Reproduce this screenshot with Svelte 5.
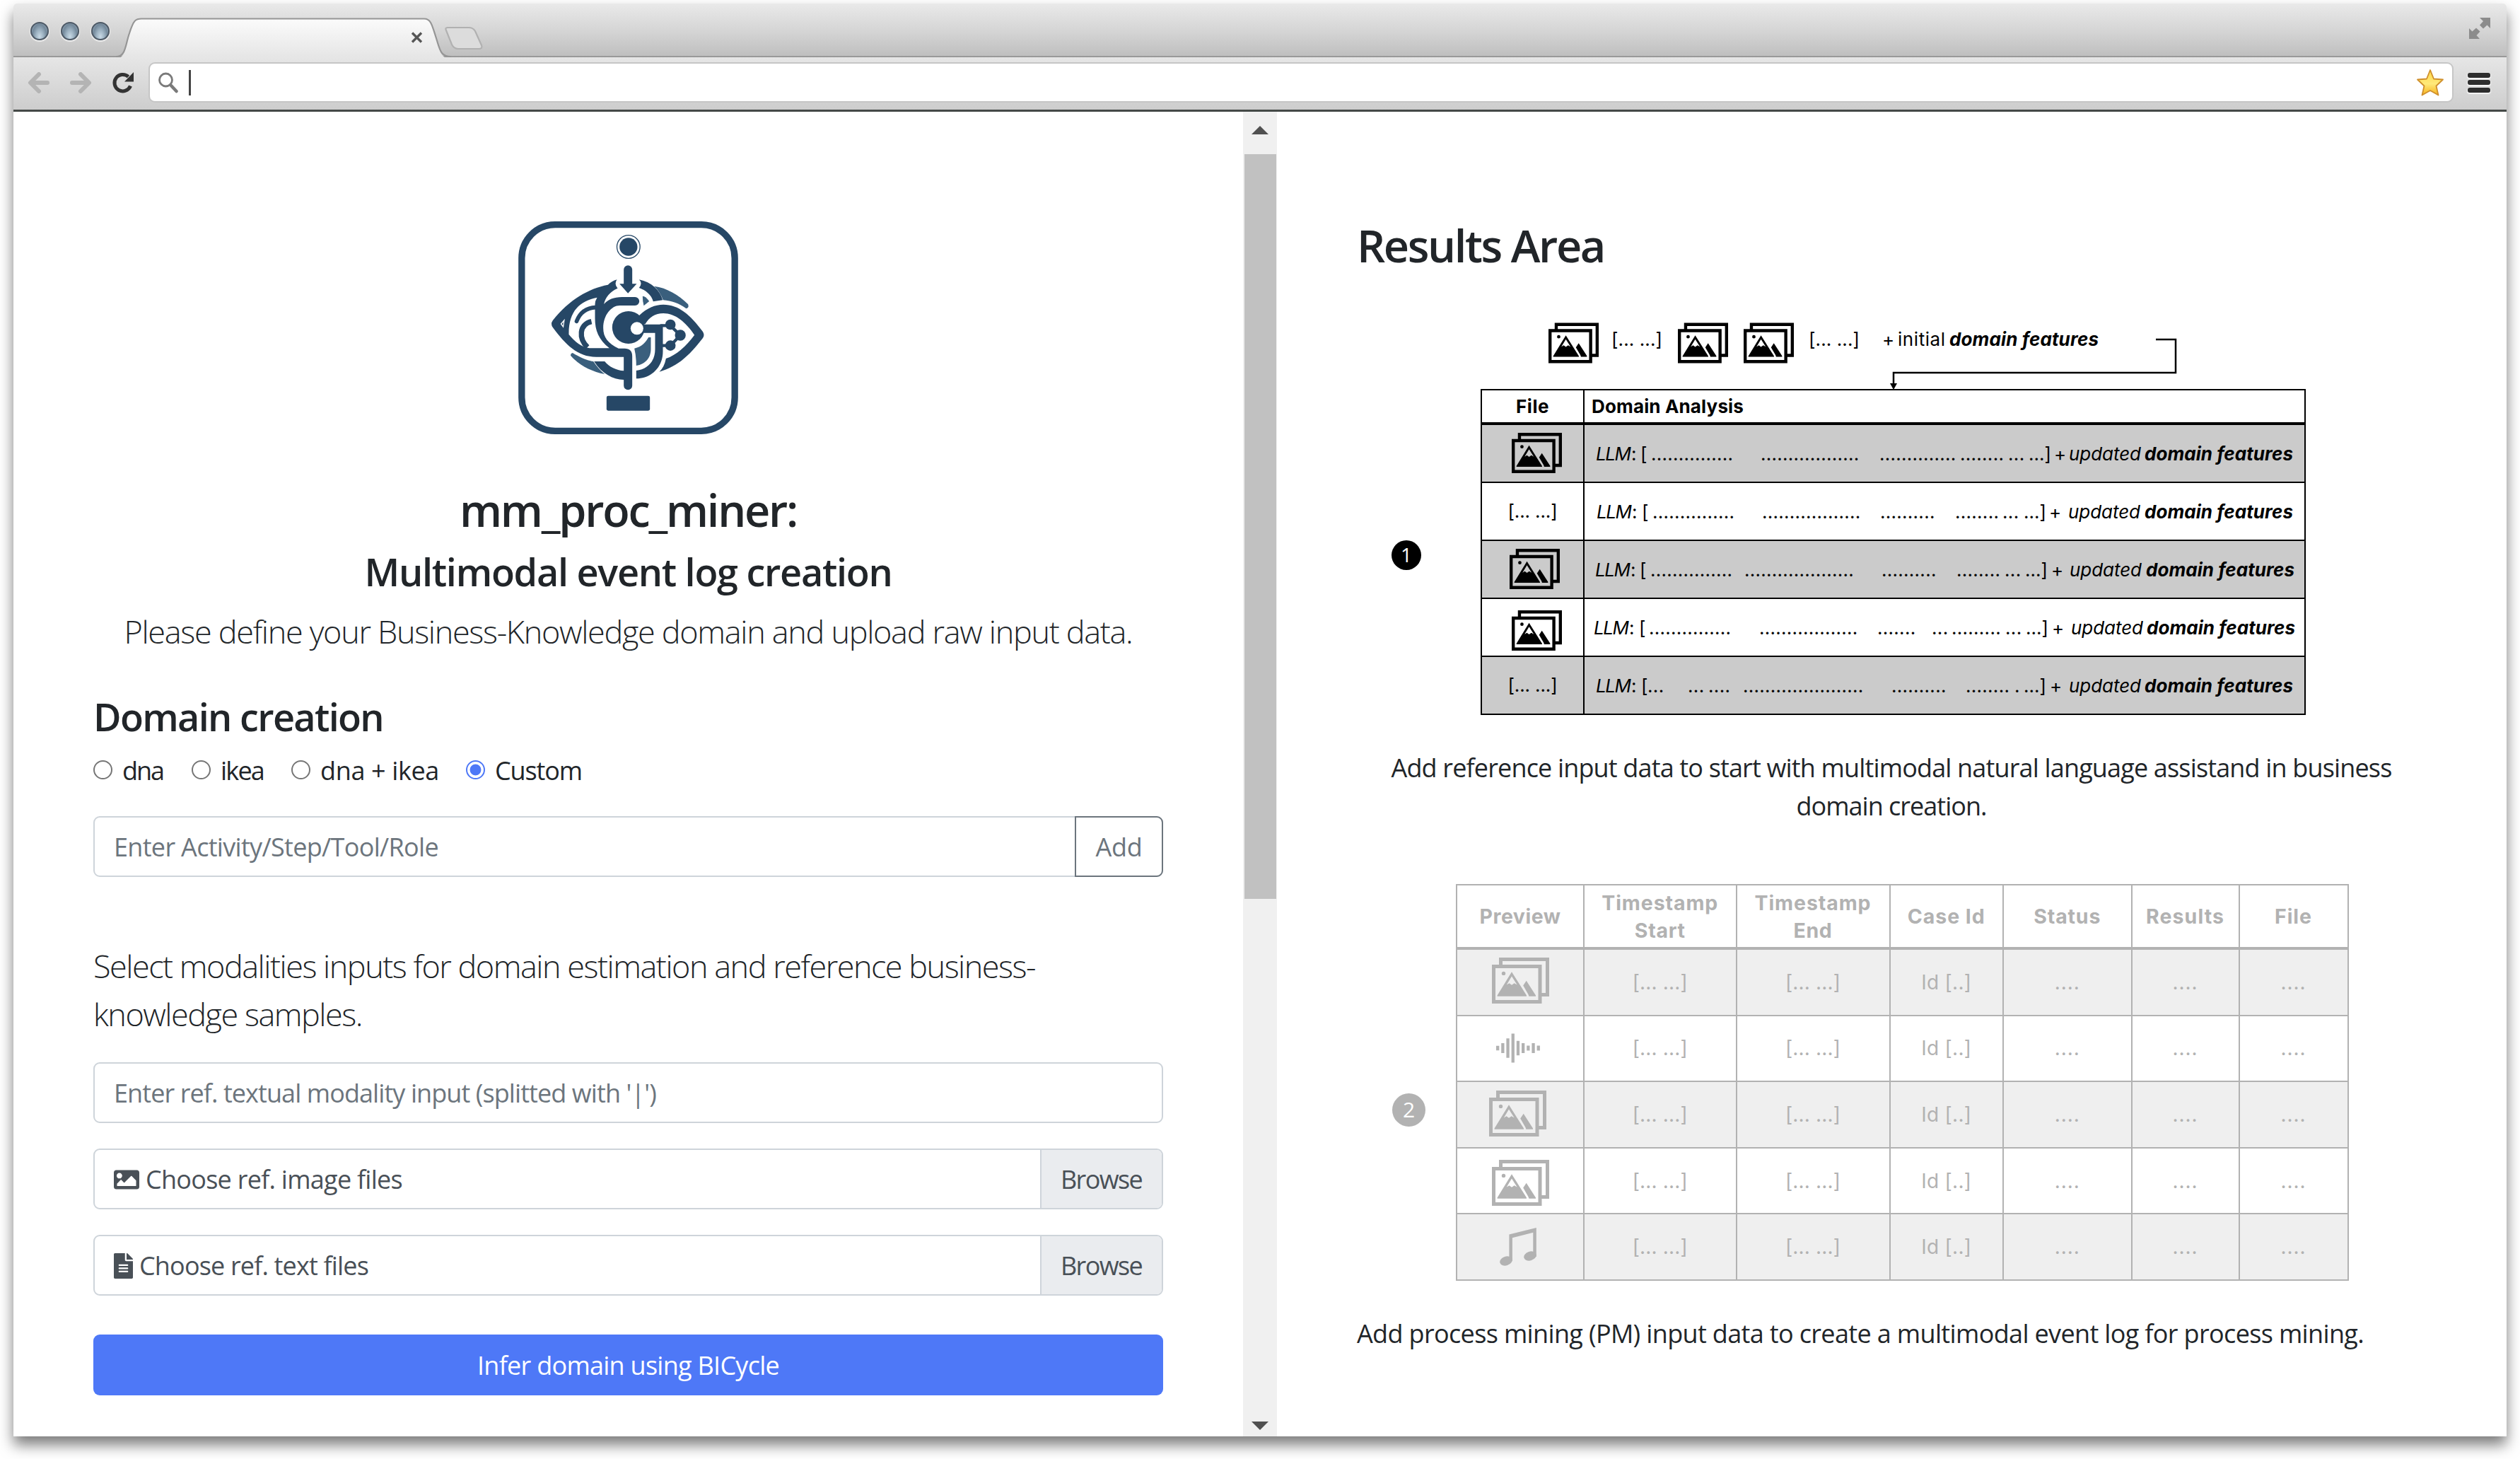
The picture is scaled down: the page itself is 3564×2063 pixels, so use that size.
<script>
  // Spreads the letters of a text so that it spans the given design width.
  function fit(node, width) {
    const apply = (w) => {
      node.style.letterSpacing = '0px';
      const natural = node.getBoundingClientRect().width;
      const count = node.textContent.length;
      if (count > 1) node.style.letterSpacing = `${((w - natural) / count).toFixed(3)}px`;
    };
    apply(width);
    return { update: apply };
  }

  const options = [
    { label: 'dna', width: 58, gap: 40 },
    { label: 'ikea', width: 61, gap: 39 },
    { label: 'dna + ikea', width: 168, gap: 38 },
    { label: 'Custom', width: 123, gap: 0 }
  ];
  let selected = $state('Custom');

  const dots = (x, n) => ({ x: x - 2, text: '.'.repeat(n), w: n * 7.74 });
  const domainRow = (icon, llm, bracket, runs, close, plus, updated, features) => ({
    icon,
    parts: [
      { x: llm, text: 'LLM', w: 50, style: 'italic' },
      { x: llm + 50, text: ':', w: 7 },
      { x: bracket - 2, text: '[', w: 9 },
      ...runs.map(([x, n]) => dots(x, n)),
      { x: close - 2, text: '...]', w: 32 },
      { x: plus - 2, text: '+', w: 17 },
      { x: updated - 1, text: 'updated', w: 102, style: 'italic' },
      { x: features - 1, text: 'domain features', w: 210, style: 'strong' }
    ]
  });

  const domainRows = [
    domainRow('high', 2256, 2321, [[2336, 15], [2491, 18], [2659, 14], [2773, 8], [2841, 3]], 2870, 2906, 2926, 3033),
    domainRow('', 2257, 2323, [[2338, 15], [2493, 18], [2660, 10], [2766, 8], [2833, 3]], 2863, 2899, 2925, 3033),
    domainRow('nudged', 2255, 2320, [[2335, 15], [2468, 20], [2662, 10], [2768, 8], [2836, 3]], 2865, 2902, 2927, 3035),
    domainRow('low', 2253, 2319, [[2333, 15], [2489, 18], [2656, 7], [2733, 3], [2761, 9], [2837, 3]], 2866, 2903, 2929, 3036),
    domainRow('', 2256, 2322, [[2331, 3], [2388, 3], [2417, 4], [2466, 22], [2676, 10], [2781, 8], [2850, 1]], 2863, 2900, 2926, 3033)
  ];

  const logHeads = [
    [['Preview', 115]],
    [['Timestamp', 165], ['Start', 72]],
    [['Timestamp', 165], ['End', 55]],
    [['Case Id', 110]],
    [['Status', 95]],
    [['Results', 111]],
    [['File', 53]]
  ];
  const logRows = ['photo', 'wave', 'photo nudged', 'photo low', 'music'];
  const waveBars = [6.5, 14, 27.5, 41, 20.5, 14, 7, 14, 7];
</script>

{#snippet photos()}
  <path fill-rule="evenodd" d="M10 10V0H81V55H70.5V50H76V5H15V10ZM0 10H70.5V65H0ZM5 15V60H65.5V15Z" />
  <circle cx="16.5" cy="22.4" r="2.7" />
  <path fill-rule="evenodd" d="M28 20.2 49 53.6V54.8H7.6V53.6ZM28 26.5 20.8 38.5 24.5 36.3 28 38.8 31.7 36.3 35.6 38.5Z" />
  <path d="M48.7 32.7 62 53.4V54.8H52.4L51.4 52 44.2 39.6Z" />
{/snippet}

<div class="page">
  <div class="window">
    <header class="strip">
      <div class="lights"><i></i><i></i><i></i></div>
      <svg class="tab" viewBox="164 23 474 60" width="474" height="60">
        <defs>
          <linearGradient id="tabFill" x1="0" y1="0" x2="0" y2="1">
            <stop offset="0" stop-color="#fbfbfb" /><stop offset="1" stop-color="#e5e5e5" />
          </linearGradient>
        </defs>
        <path fill="url(#tabFill)" d="M164 83 C178 83 177 66 183 48 C189 28 192 27 200 27 H600 C609 27 611 36 616 52 C622 70 622 83 638 83Z" />
        <path fill="none" stroke="#959595" stroke-width="2.2" d="M164 80 C178 80 177 64 183 47 C189 28 192 26.500 200 26.500 H600 C609 26.500 611 35 616 51 C622 69 622 80 638 80" />
        <path stroke="#555" stroke-width="3.4" d="M583 46.500 596 59.500M596 46.500 583 59.500" />
      </svg>
      <svg class="newtab" viewBox="626 34 60 40" width="60" height="40">
        <path fill="#dcdcdc" stroke="#b1b1b1" stroke-width="2.200" d="M633 39H663Q669 39 672 44L681 64Q683 69 677 69H648Q642 69 639 63L631 43Q629 39 633 39Z" />
      </svg>
      <svg class="expand" viewBox="0 0 32 32" width="32" height="32">
        <path fill="#8c8c8c" d="M16 1H31V16L26.500 11.500 21 16.500 16 11.500 21 6ZM1 16 5.500 20.500 11 15.500 16.500 20.500 11.500 26 16 31H1Z" />
      </svg>
    </header>

    <div class="toolbar">
      <svg viewBox="0 0 32 30" width="32" height="30"><path class="arrow" d="M16 3 4 15 16 27M5 15H28" /></svg>
      <svg class="forward" viewBox="0 0 32 30" width="32" height="30"><path class="arrow" d="M16 3 28 15 16 27M27 15H4" /></svg>
      <svg class="reload" viewBox="0 0 34 34" width="34" height="34">
        <path fill="none" stroke="#333" stroke-width="5" d="M27.500 21.500A11.700 11.700 0 1 1 24.500 8.500" />
        <path fill="#333" d="M32 2V15.500H19Z" />
      </svg>
      <div class="address">
        <svg viewBox="0 0 30 30" width="30" height="30">
          <circle cx="11.500" cy="11" r="9" fill="none" stroke="#7a7a7a" stroke-width="2.800" />
          <path stroke="#7a7a7a" stroke-width="4.500" stroke-linecap="round" d="M19 19 26.500 27" />
        </svg>
        <b class="caret"></b>
        <svg class="star" viewBox="0 0 40 40" width="40" height="40">
          <defs>
            <linearGradient id="starFill" x1="0" y1="0" x2="0" y2="1">
              <stop offset="0" stop-color="#ffd94a" /><stop offset=".55" stop-color="#ffe97a" /><stop offset="1" stop-color="#f6b21c" />
            </linearGradient>
          </defs>
          <path fill="url(#starFill)" stroke="#cf8f2c" stroke-width="1.800" stroke-linejoin="round" d="M20 2 25 14.500 38 15.500 28.500 24.500 31.500 37.500 20 31 8.500 37.500 11.500 24.500 2 15.500 15 14.500Z" />
        </svg>
      </div>
      <div class="menu"><i></i><i></i><i></i></div>
    </div>

    <div class="panes">
      <main class="left">
        <svg class="logo" viewBox="100 68 932 903" width="311" height="301">
          <rect x="114" y="82" width="904" height="875" rx="142" fill="none" stroke="#264766" stroke-width="28" />
          <g fill="#264766">
            <circle cx="567" cy="176" r="49" fill="none" stroke="#264766" stroke-width="4" />
            <circle cx="567" cy="176" r="38" />
            <path d="M547 333V273a18 18 0 0 1 36 0V333H602L565 373 529 333Z" />
            <rect x="474" y="808" width="184" height="63" rx="7" />
            <path fill-rule="evenodd" d="M518 315Q495 322 480 337C400 352 315 400 246 488Q235 503 246 518C300 590 350 643 430 643H547V702C515 700 485 685 466 662H421C455 715 500 738 547 740V765a18 18 0 0 0 36 0V640Q583 607 550 607H525C480 585 460 560 460 520C460 465 495 425 530 425H595a18 18 0 0 0 0-36H540C505 389 480 400 463 419C468 390 490 365 521 352Q505 335 518 315ZM434 391C360 405 312 450 314 548C340 580 370 602 402 606H486C440 570 425 530 425 480V420Q425 405 434 391Z" />
            <circle cx="567" cy="518" r="69" />
            <path d="M612 468C645 435 680 421 715 421C780 421 830 465 882 535Q892 550 882 564C830 630 785 680 698 706Q720 685 726 650C770 635 810 600 847 550C810 495 765 458 715 458C680 458 655 475 638 504L610 500Z" />
            <path d="M615 505H713V620C713 690 660 735 600 735V701C650 695 680 660 680 610V541H620Z" />
            <circle cx="745" cy="506" r="22" /><circle cx="787" cy="551" r="23" /><circle cx="745" cy="595" r="22" />
            <path d="M612 315C665 325 700 360 712 402L672 408C665 380 640 360 612 350Q628 330 612 315Z" />
          </g>
          <g fill="none" stroke="#264766" stroke-linecap="round">
            <path stroke-width="17" d="M347 492C360 458 385 435 428 433" />
            <path stroke-width="22" stroke-linecap="butt" d="M410 493C357 505 355 565 393 602" />
            <path stroke-width="13" d="M705 510H745L787 551 745 595H705" />
            <path stroke="#fff" stroke-width="4" d="M281 503 294 488 290 515Z" />
          </g>
          <g fill="#3a5f7d">
            <path d="M676 343C730 350 780 380 820 420Q825 435 812 438C780 415 750 405 714 402Q700 365 676 343Z" />
            <path d="M627 385Q640 385 655 407L632 426Q627 405 627 385Z" />
            <path d="M330 626C370 650 400 660 418 662Q440 695 466 716C410 705 360 680 322 638Q320 628 330 626Z" />
            <path d="M592 607C625 600 640 580 652 560H662V610C662 650 635 675 600 680Q600 640 592 607Z" />
          </g>
          <circle cx="603" cy="522" r="27" fill="#fff" />
        </svg>
        <h1><span use:fit={477}>mm_proc_miner:</span></h1>
        <h2><span use:fit={746}>Multimodal event log creation</span></h2>
        <p class="lead"><span use:fit={1426}>Please define your Business-Knowledge domain and upload raw input data.</span></p>
        <h2 class="section"><span use:fit={410}>Domain creation</span></h2>

        <div class="radios">
          {#each options as option}
            <label style:margin-right="{option.gap}px">
              <input type="radio" name="domain" value={option.label} bind:group={selected} />
              <span use:fit={option.width}>{option.label}</span>
            </label>
          {/each}
        </div>

        <div class="field group">
          <span class="hint" use:fit={459}>Enter Activity/Step/Tool/Role</span>
          <button class="add"><span use:fit={66}>Add</span></button>
        </div>

        <p class="note">
          <span use:fit={1332}>Select modalities inputs for domain estimation and reference business-</span><br />
          <span use:fit={380}>knowledge samples.</span>
        </p>

        <div class="field textual"><span class="hint" use:fit={767}>Enter ref. textual modality input (splitted with '|')</span></div>

        <div class="field file">
          <svg viewBox="0 0 512 512" width="36" height="36">
            <path d="M464 448H48c-26.500 0-48-21.500-48-48V112c0-26.500 21.500-48 48-48h416c26.500 0 48 21.500 48 48v288c0 26.500-21.500 48-48 48zM112 120c-31 0-56 25-56 56s25 56 56 56 56-25 56-56-25-56-56-56zM64 384h384V272l-87.500-87.500c-4.700-4.700-12.300-4.700-17 0L208 320l-55.500-55.500c-4.700-4.700-12.300-4.700-17 0L64 336v48z" />
          </svg>
          <span class="filename" use:fit={363}>Choose ref. image files</span>
          <span class="browse"><span use:fit={115}>Browse</span></span>
        </div>
        <div class="field file">
          <svg viewBox="0 0 384 512" width="27" height="36">
            <path d="M224 136V0H24C10.700 0 0 10.700 0 24v464c0 13.300 10.700 24 24 24h336c13.300 0 24-10.700 24-24V160H248c-13.200 0-24-10.800-24-24zm64 236c0 6.600-5.400 12-12 12H108c-6.600 0-12-5.400-12-12v-8c0-6.600 5.400-12 12-12h168c6.600 0 12 5.400 12 12v8zm0-64c0 6.600-5.400 12-12 12H108c-6.600 0-12-5.400-12-12v-8c0-6.600 5.400-12 12-12h168c6.600 0 12 5.400 12 12v8zm0-72v8c0 6.600-5.400 12-12 12H108c-6.600 0-12-5.400-12-12v-8c0-6.600 5.400-12 12-12h168c6.600 0 12 5.400 12 12zm96-114v6H256V0h6c6.400 0 12.500 2.500 17 7l98 98c4.500 4.500 7 10.600 7 17z" />
          </svg>
          <span class="filename" use:fit={324}>Choose ref. text files</span>
          <span class="browse"><span use:fit={115}>Browse</span></span>
        </div>

        <button class="infer"><span use:fit={427}>Infer domain using BICycle</span></button>
      </main>

      <div class="scrollbar">
        <svg viewBox="0 0 24 12" width="24" height="12"><path fill="#505050" d="M12 0 24 12H0Z" /></svg>
        <div class="thumb"></div>
        <svg viewBox="0 0 24 12" width="24" height="12"><path fill="#505050" d="M0 0H24L12 12Z" /></svg>
      </div>

      <section class="right">
        <h1><span use:fit={350}>Results Area</span></h1>

        <svg class="flow" viewBox="2094 440 1168 110" width="1168" height="110">
          {#each [2190, 2373, 2466] as x}
            <g transform="translate({x} 456.500) scale(.877)">{@render photos()}</g>
          {/each}
          <text x="2279" y="489" textLength="72">[... ...]</text>
          <text x="2558" y="489" textLength="72">[... ...]</text>
          <text x="2662" y="489" textLength="17">+</text>
          <text x="2684" y="489" textLength="67">initial</text>
          <text class="strong" x="2757" y="489" textLength="211">domain features</text>
          <path fill="none" stroke="#000" stroke-width="2.500" d="M3049 480H3077V527H2678V543" />
          <path d="M2673 542H2683L2678 551Z" />
        </svg>

        <div class="figure first">
          <span class="badge">1</span>
          <div class="domain-table">
            <div class="head"><div><span use:fit={47}>File</span></div><div class="analysis"><span use:fit={215}>Domain Analysis</span></div></div>
            {#each domainRows as row}
              <div class="row">
                <div>
                  {#if row.icon}
                    <svg class="thumbnail {row.icon}" viewBox="0 0 81 65" width="71" height="57">{@render photos()}</svg>
                  {:else}
                    <span use:fit={70}>[... ...]</span>
                  {/if}
                </div>
                <svg viewBox="2240 0 1020 80" width="1020" height="80">
                  {#each row.parts as part}
                    <text class={part.style} x={part.x} y="49.5" textLength={part.w}>{part.text}</text>
                  {/each}
                </svg>
              </div>
            {/each}
          </div>
        </div>

        <p class="caption">
          <span use:fit={1415}>Add reference input data to start with multimodal natural language assistand in business</span><br />
          <span use:fit={269}>domain creation.</span>
        </p>

        <div class="figure second">
          <span class="badge">2</span>
          <div class="log-table">
            {#each logHeads as lines}
              <div class="th">
                {#each lines as [text, width]}<span use:fit={width}>{text}</span>{/each}
              </div>
            {/each}
            {#each logRows as kind, i}
              <div class="td" class:shade={i % 2 === 0}>
                {#if kind === 'wave'}
                  <svg class="wave" viewBox="0 0 62 42" width="62" height="42">
                    {#each waveBars as h, b}<rect x={b * 7.2} y={21 - h / 2} width="4.300" height={h} />{/each}
                  </svg>
                {:else if kind === 'music'}
                  <svg class="music" viewBox="0 0 52 54" width="52" height="54">
                    <path d="M13.400 9.400 51.800 0V41H47.300V6.800L17.900 14.300V47H13.400Z" />
                    <ellipse cx="9" cy="47" rx="9" ry="6.300" transform="rotate(-18 9 47)" />
                    <ellipse cx="43" cy="40" rx="9" ry="6.300" transform="rotate(-18 43 40)" />
                  </svg>
                {:else}
                  <svg class={kind} viewBox="0 0 81 65" width="81" height="65">{@render photos()}</svg>
                {/if}
              </div>
              <div class="td" class:shade={i % 2 === 0}><span use:fit={78}>[... ...]</span></div>
              <div class="td" class:shade={i % 2 === 0}><span use:fit={78}>[... ...]</span></div>
              <div class="td" class:shade={i % 2 === 0}><span use:fit={71}>Id [..]</span></div>
              {#each [0, 1, 2] as _}
                <div class="td" class:shade={i % 2 === 0}><span use:fit={36}>....</span></div>
              {/each}
            {/each}
          </div>
        </div>

        <p class="caption wide"><span use:fit={1424}>Add process mining (PM) input data to create a multimodal event log for process mining.</span></p>
      </section>
    </div>
  </div>
</div>

<style>
  :global(body) {
    background: #fff;
  }
  * {
    box-sizing: border-box;
  }
  .page {
    width: 3564px;
    height: 2063px;
    padding: 5px 19px 0 19px;
    overflow: hidden;
    background: #fff;
    color: #212529;
    font: 400 36px/54px 'Open Sans', 'Noto Sans', sans-serif;
  }
  .window {
    height: 2026px;
    display: flex;
    flex-direction: column;
    background: #fff;
    border-radius: 5px 5px 0 0;
    box-shadow: 0 12px 20px rgba(0, 0, 0, 0.52);
  }
  svg {
    display: block;
    flex: none;
  }
  span {
    white-space: pre;
  }
  h1,
  h2,
  p {
    margin: 0;
    white-space: nowrap;
  }

  .strip {
    height: 76px;
    flex: none;
    display: flex;
    align-items: flex-start;
    border-bottom: 2px solid #999;
    border-radius: 5px 5px 0 0;
    background: linear-gradient(#e9e9e9, #d6d6d6 50%, #bfbfbf);
  }
  .lights {
    display: flex;
    gap: 17px;
    width: 145px;
    padding: 26px 0 0 24px;
  }
  .lights i {
    width: 26px;
    height: 26px;
    flex: none;
    border: 2px solid #4d5966;
    border-radius: 50%;
    background: radial-gradient(ellipse at 50% 85%, #c9dae6 0, #9db2c2 35%, #73889a 65%, #a9bccb 100%);
    box-shadow: 0 1px 1px 1px #eee;
  }
  .tab {
    margin-top: 18px;
  }
  .newtab {
    margin: 29px 0 0 -12px;
  }
  .expand {
    margin: 19px 22px 0 auto;
  }

  .toolbar {
    height: 77px;
    flex: none;
    display: flex;
    align-items: center;
    padding: 0 23px 3px 20px;
    background: linear-gradient(#e6e6e6, #cdcdcd);
    border-bottom: 3px solid #444947;
  }
  .arrow {
    fill: none;
    stroke: #b4b4b4;
    stroke-width: 6;
    stroke-linecap: round;
    stroke-linejoin: round;
  }
  .forward {
    margin-left: 27px;
  }
  .reload {
    margin-left: 27px;
  }
  .address {
    flex: 1;
    height: 53px;
    margin: 0 22px 0 21px;
    padding: 0 11px 0 11px;
    display: flex;
    align-items: center;
    background: #fff;
    border-radius: 7px;
    box-shadow: 0 0 0 2px #c6c6c6;
  }
  .caret {
    width: 3px;
    height: 36px;
    margin-left: 14px;
    background: #444;
  }
  .star {
    margin-left: auto;
  }
  .menu {
    display: grid;
    gap: 3.500px;
  }
  .menu i {
    width: 32px;
    height: 7px;
    border-radius: 3px;
    background: #2d2d2d;
    box-shadow: 0 1px 1px 1px #f4f4f4;
  }

  .panes {
    flex: 1;
    min-height: 0;
    display: flex;
  }
  .left {
    width: 1739px;
    flex: none;
    padding: 155px 113px 0;
    display: flex;
    flex-direction: column;
    text-align: center;
  }
  .logo {
    align-self: center;
  }
  h1 {
    margin-top: 69px;
    font-size: 63px;
    font-weight: 600;
    line-height: 76px;
  }
  h2 {
    margin-top: 17px;
    font-size: 54px;
    font-weight: 600;
    line-height: 65px;
  }
  .lead {
    margin-top: 18px;
    font-size: 45px;
    font-weight: 300;
    line-height: 68px;
  }
  .section {
    margin-top: 54px;
    text-align: left;
  }
  .radios {
    display: flex;
    margin: 16px 0 37px;
  }
  label {
    display: flex;
    align-items: flex-start;
  }
  label span {
    padding-top: 1px;
  }
  input {
    appearance: none;
    width: 27px;
    height: 27px;
    margin: 13px 14px 0 0;
    border: 2px solid #767676;
    border-radius: 50%;
    background: #fff;
  }
  input:checked {
    border-color: #4e78f7;
    background: radial-gradient(circle, #4e78f7 0 7.500px, #fff 8.300px);
  }
  .field {
    height: 86px;
    flex: none;
    display: flex;
    align-items: center;
    padding: 2px 0 0 27px;
    border: 2px solid #ced4da;
    border-radius: 9px;
    overflow: hidden;
    text-align: left;
  }
  .hint {
    color: #6c757d;
  }
  button {
    font: inherit;
    cursor: pointer;
  }
  .group {
    overflow: visible;
  }
  .add {
    width: 125px;
    height: 86px;
    margin: -2px -2px 0 auto;
    padding: 2px 0 0;
    border: 2px solid #6c757d;
    border-radius: 0 9px 9px 0;
    background: #fff;
    color: #6c757d;
  }
  .note {
    margin: 92px 0 35px;
    text-align: left;
    font-size: 45px;
    font-weight: 300;
    line-height: 67.500px;
  }
  .file {
    margin-top: 36px;
    color: #495057;
  }
  .file svg {
    fill: #495057;
  }
  .filename {
    margin-left: 9px;
  }
  .browse {
    width: 172px;
    height: 82px;
    margin: -2px 0 0 auto;
    padding: 1px 0 0 27px;
    border-left: 2px solid #ced4da;
    background: #eaecef;
    line-height: 82px;
  }
  .infer {
    height: 86px;
    margin-top: 55px;
    padding: 2px 0 0;
    border: 0;
    border-radius: 9px;
    background: #4e78f7;
    color: #fff;
  }

  .scrollbar {
    width: 48px;
    flex: none;
    padding: 20px 0 9px;
    display: flex;
    flex-direction: column;
    align-items: center;
    background: #f0f0f0;
  }
  .thumb {
    width: 45px;
    height: 1053px;
    margin: 28px 0 auto;
    background: #c1c1c1;
  }

  .right {
    flex: 1;
    min-width: 0;
  }
  .right h1 {
    margin: 151px 0 0 113px;
  }
  .flow {
    margin: 55px 0 0 288px;
    overflow: visible;
  }
  text,
  .domain-table,
  .log-table {
    font-family: Inter, Roboto, sans-serif;
    font-size: 26px;
  }
  .strong {
    font-weight: 700;
    font-style: italic;
  }
  .italic {
    font-style: italic;
  }
  .figure {
    display: flex;
    align-items: center;
    padding-left: 162px;
  }
  .badge {
    width: 42px;
    height: 42px;
    margin: 9px 84px 0 0;
    border-radius: 50%;
    background: #000;
    color: #fff;
    font-size: 28px;
    line-height: 41px;
    text-align: center;
  }
  .domain-table {
    width: 1167px;
    color: #000;
    border: 2px solid #000;
    border-bottom: 0;
  }
  .head,
  .row {
    display: grid;
    grid-template-columns: 145px 1fr;
    height: 82px;
    border-bottom: 2px solid #000;
    align-items: stretch;
  }
  .head {
    height: 49px;
    border-bottom-width: 4px;
    font-weight: 700;
    line-height: 46px;
  }
  .head > div,
  .row > div {
    display: flex;
    align-items: center;
    justify-content: center;
    border-right: 2px solid #000;
  }
  .head > .analysis {
    justify-content: flex-start;
    padding-left: 10px;
    border: 0;
  }
  .row:nth-child(even) {
    background: #cbcbcb;
  }
  .thumbnail {
    margin: 0 0 1px 12px;
  }
  .thumbnail.nudged {
    margin-left: 6px;
  }
  .thumbnail.low {
    margin-bottom: -8px;
  }
  .caption {
    width: 1740px;
    margin: 48px 0 83px;
    padding-right: 2px;
    text-align: center;
  }
  .caption.wide {
    margin: 48px 0 0 113px;
    text-align: left;
  }
  .second {
    padding-left: 163px;
  }
  .second .badge {
    width: 47px;
    height: 47px;
    margin: 79px 43px 0 0;
    background: #b2b2b2;
    font-size: 30px;
    line-height: 46px;
  }
  .log-table {
    display: grid;
    grid-template-columns: 180px 215.500px 217px 160.500px 181.500px 152px 154px;
    grid-template-rows: 91px repeat(5, 93.600px);
    border: solid #b2b2b2;
    border-width: 2px 0 0 2px;
    color: #b2b2b2;
    fill: #b2b2b2;
    font-size: 28px;
  }
  .th,
  .td {
    display: flex;
    flex-direction: column;
    align-items: center;
    justify-content: center;
    border: solid #b2b2b2;
    border-width: 0 2px 2px 0;
  }
  .th {
    padding-top: 2px;
    border-bottom-width: 4px;
    font-weight: 700;
    font-size: 28.500px;
    line-height: 38.500px;
  }
  .shade {
    background: #efefef;
  }
  .photo {
    margin-bottom: 5px;
  }
  .photo.nudged {
    margin: 0 8px 3px 0;
  }
  .photo.low {
    margin: 6px 0 0;
  }
  .wave {
    margin-right: 6px;
  }
  .music {
    margin-right: 6px;
  }
</style>
